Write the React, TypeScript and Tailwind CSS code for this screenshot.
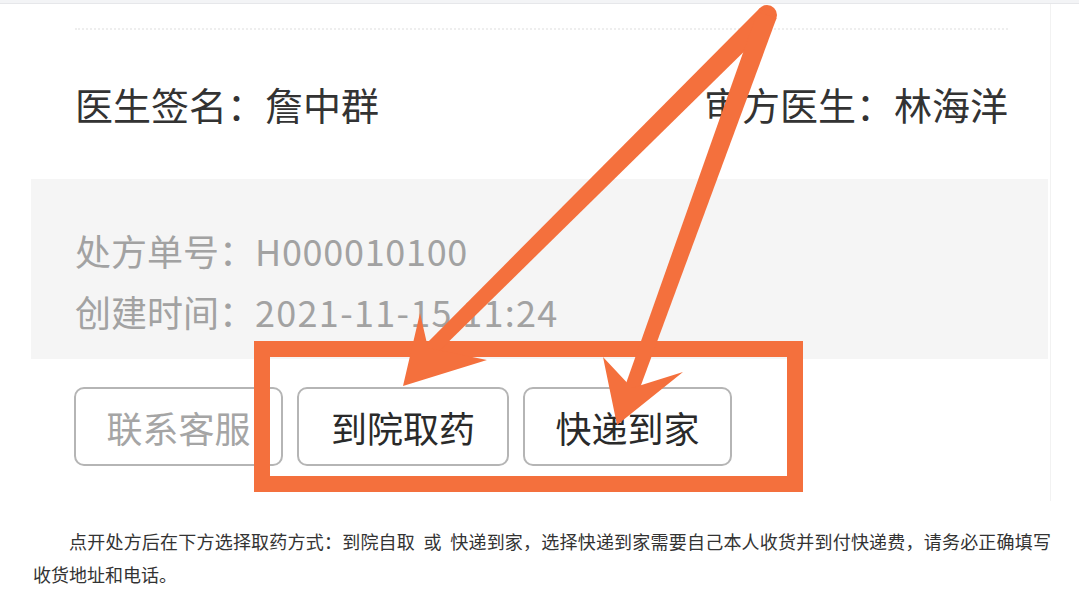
export default function App() {
  const cjk = "font-['Noto_Sans_CJK_SC','Noto_Sans',sans-serif]";
  return (
    <div className={`relative w-[1079px] h-[602px] bg-white overflow-hidden ${cjk}`}>
      <div className="h-[4px] bg-[#f3f4f6] border-b border-[#e6e7ea]" />
      <div className="ml-[31px] w-[1020px] h-[497px] border-r border-[#f2f2f2] flex flex-col">
        <div className="h-[175px] flex flex-col pl-[44px] pr-[42px]">
          <div className="mt-[24px] border-t-2 border-dotted border-[#eeeeee]" />
          <div className="mt-[55px] flex justify-between text-[38px] leading-[38px] text-[#333333]">
            <span>医生签名：詹中群</span>
            <span>审方医生：林海洋</span>
          </div>
        </div>
        <div className="h-[180px] bg-[#f5f5f5] mr-[2px] pl-[44px] pt-[41px] text-[36px] leading-[61px] text-[#a2a2a2]">
          <div>
            处方单号：<span className="tracking-[0.7px]">H000010100</span>
          </div>
          <div>
            创建时间：<span className="tracking-[1.3px]">2021-11-15 11:24</span>
          </div>
        </div>
        <div className="mt-[28px] pl-[43px] flex gap-[14px] text-[36px]">
          <div className="w-[209px] h-[79px] rounded-[10px] border-2 border-[#b5b5b5] flex items-center justify-center text-[#a5a5a5]">
            联系客服
          </div>
          <div className="w-[212px] h-[79px] rounded-[10px] border-2 border-[#b5b5b5] flex items-center justify-center text-[#2a2a2a]">
            到院取药
          </div>
          <div className="w-[209px] h-[79px] rounded-[10px] border-2 border-[#b5b5b5] flex items-center justify-center text-[#2a2a2a]">
            快递到家
          </div>
        </div>
      </div>
      <div className="mt-[24px] ml-[33px] w-[1018px] text-[18px] leading-[33px] text-[#333333]">
        <div className="indent-[36px] text-justify [text-align-last:justify]">
          点开处方后在下方选择取药方式：到院自取&nbsp;&nbsp;或&nbsp;&nbsp;快递到家，选择快递到家需要自己本人收货并到付快递费，请务必正确填写
        </div>
        <div>收货地址和电话。</div>
      </div>
      <svg
        className="absolute left-0 top-0 pointer-events-none"
        width="1079"
        height="602"
        viewBox="0 0 1079 602"
      >
        <rect x="262" y="349" width="533" height="135" fill="none" stroke="#f4703d" strokeWidth="16" />
        <circle cx="767" cy="15" r="10" fill="#f4703d" />
        <polygon points="759.9,7.9 774.1,22.1 430,360 420,350" fill="#f4703d" />
        <polygon points="757.5,11.7 776.5,18.3 637,396 623,392" fill="#f4703d" />
        <polygon points="403,386 420,313 428,348 487,360" fill="#f4703d" />
        <polygon points="617,425 603,357 632,388 683,372" fill="#f4703d" />
      </svg>
    </div>
  );
}
